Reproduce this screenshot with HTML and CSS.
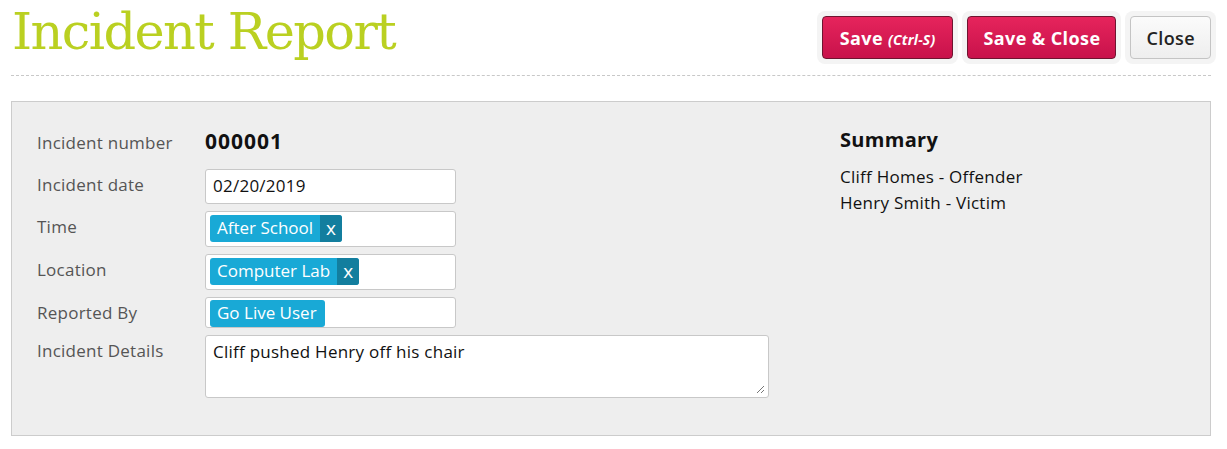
FILE: index.html
```html
<!DOCTYPE html>
<html>
<head>
<meta charset="utf-8">
<link rel="stylesheet" href="styles.css">
</head>
<body>
<div class="header">
  <h1 class="title">Incident Report</h1>
  <div class="actions">
    <div class="btn-wrap"><button class="btn btn-primary btn-save">Save <em class="hint">(Ctrl-S)</em></button></div>
    <div class="btn-wrap"><button class="btn btn-primary">Save &amp; Close</button></div>
    <div class="btn-wrap"><button class="btn btn-default">Close</button></div>
  </div>
</div>
<div class="divider"></div>
<div class="panel">
  <div class="form">
    <div class="row row-static">
      <div class="label">Incident number</div>
      <div class="value number">000001</div>
    </div>
    <div class="row">
      <div class="label">Incident date</div>
      <div class="field input">02/20/2019</div>
    </div>
    <div class="row">
      <div class="label">Time</div>
      <div class="field tags"><span class="tag"><span class="tag-text">After School</span><span class="tag-x">x</span></span></div>
    </div>
    <div class="row">
      <div class="label">Location</div>
      <div class="field tags"><span class="tag"><span class="tag-text">Computer Lab</span><span class="tag-x">x</span></span></div>
    </div>
    <div class="row">
      <div class="label">Reported By</div>
      <div class="field tags short"><span class="tag"><span class="tag-text solo">Go Live User</span></span></div>
    </div>
    <div class="row">
      <div class="label">Incident Details</div>
      <div class="field textarea">Cliff pushed Henry off his chair
        <svg class="grip" width="9" height="9" viewBox="0 0 9 9"><path d="M8 1 L1 8 M8 5 L5 8" stroke="#777" stroke-width="1"/></svg>
      </div>
    </div>
  </div>
  <div class="summary">
    <h2 class="summary-title">Summary</h2>
    <div class="summary-line">Cliff Homes - Offender</div>
    <div class="summary-line">Henry Smith - Victim</div>
  </div>
</div>
</body>
</html>
```

FILE: styles.css
```css
* { box-sizing: border-box; }
html, body { margin: 0; padding: 0; background: #fff; }
body {
  font-family: "Open Sans", "Lato", sans-serif;
  font-size: 17px;
  letter-spacing: 0.25px;
  color: #222;
}
.header {
  margin: 0 11px 0 11px;
  height: 75px;
  display: flex;
  justify-content: space-between;
  align-items: flex-start;
}
.divider {
  margin: 0 16px 0 11px;
  border-top: 1px dashed #c8c8c8;
}
.title {
  margin: 0;
  padding: 0 0 0 1px;
  font-family: "DejaVu Serif", serif;
  font-weight: normal;
  font-size: 51px;
  line-height: 64px;
  letter-spacing: -1.6px;
  color: #bad021;
}
.actions {
  display: flex;
  gap: 4px;
  padding-top: 11px;
}
.btn-wrap {
  background: #f4f4f4;
  border-radius: 8px;
  padding: 5px;
}
.btn {
  font-family: "Open Sans", sans-serif;
  height: 43px;
  border-radius: 4px;
  font-size: 18px;
  letter-spacing: 0.4px;
  font-weight: bold;
  padding: 0 15px;
  cursor: pointer;
}
.btn-primary {
  background: linear-gradient(#e6245c, #c8124b);
  border: 1px solid #6e1530;
  color: #fff;
}
.btn-save { padding: 0 17px; }
.btn-default {
  background: linear-gradient(#fbfbfb, #eeeeee);
  border: 1px solid #c4c4c4;
  color: #222;
  font-weight: 600;
  padding: 0 15px;
}
.hint {
  font-size: 14px;
  font-style: italic;
  letter-spacing: 0.2px;
}
.panel {
  margin: 25px 16px 0 11px;
  height: 335px;
  background: #eee;
  border: 1px solid #ccc;
  display: flex;
  padding: 25px 25px 0 25px;
}
.form {
  width: 732px;
  display: flex;
  flex-direction: column;
  gap: 7px;
}
.row {
  display: grid;
  grid-template-columns: 168px auto;
  align-items: start;
}
.row-static { margin-bottom: 7px; }
.label {
  color: #555;
  padding-top: 4px;
}
.number {
  font-size: 21px;
  letter-spacing: 1px;
  font-weight: bold;
  color: #111;
  padding-top: 0;
}
.field {
  background: #fff;
  border: 1px solid #c8c8c8;
  border-radius: 3px;
  width: 251px;
}
.input {
  height: 35px;
  padding: 4px 7px;
  color: #111;
}
.tags {
  height: 36px;
  padding: 3px 4px;
}
.tags.short { height: 31px; padding: 2px 4px; }
.tag {
  display: inline-flex;
  height: 27px;
  background: #19a9d6;
  border-radius: 3px;
  color: #fff;
  overflow: hidden;
  letter-spacing: 0;
}
.tag-text {
  padding: 0 7px 0 7px;
  line-height: 26px;
}
.tag-text.solo { padding-right: 8px; }
.tag-x {
  background: #137e9e;
  padding: 1px 6px 0 6px;
  font-size: 19px;
  line-height: 25px;
}
.textarea {
  position: relative;
  width: 564px;
  height: 63px;
  padding: 4px 7px;
  color: #111;
}
.grip {
  position: absolute;
  right: 3px;
  bottom: 3px;
}
.summary {
  padding-left: 71px;
}
.summary-title {
  margin: 0;
  font-size: 20px;
  letter-spacing: 0.3px;
  font-weight: bold;
  color: #111;
  line-height: 26px;
}
.summary-line {
  color: #111;
  line-height: 26px;
}
.summary-title + .summary-line { margin-top: 11px; }
```
